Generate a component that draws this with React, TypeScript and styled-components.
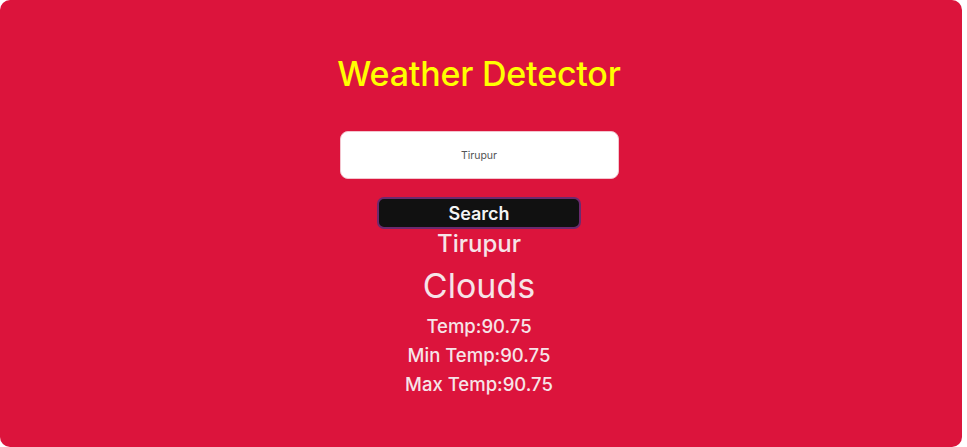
import React from "react";
import styled, { createGlobalStyle } from "styled-components";

const Global = createGlobalStyle`
  html, body { margin: 0; padding: 0; background: #ffffff; }
  body { font-family: "Inter", "Noto Sans", sans-serif; }
`;

const Card = styled.div`
  width: 962px;
  height: 447px;
  background: #dc143c;
  border-radius: 10px;
  display: flex;
  flex-direction: column;
  align-items: center;
  box-sizing: border-box;
  padding-top: 52px;
  padding-right: 4px;
`;

const Title = styled.h1`
  margin: 0;
  color: #ffff00;
  font-size: 34px;
  font-weight: 500;
  line-height: 44px;
  letter-spacing: -0.2px;
`;

const SearchInput = styled.input`
  margin-top: 35px;
  width: 279px;
  height: 48px;
  box-sizing: border-box;
  border: 1px solid #f3c5cf;
  border-radius: 8px;
  background: #ffffff;
  text-align: center;
  font-family: inherit;
  font-size: 10.5px;
  color: #555;
  outline: none;
`;

const SearchButton = styled.button`
  margin-top: 18px;
  width: 204px;
  height: 32px;
  box-sizing: border-box;
  background: #111111;
  border: 2px solid #6b2a6e;
  border-radius: 7px;
  color: #f4f4f4;
  font-family: inherit;
  font-size: 18px;
  font-weight: 600;
  cursor: pointer;
`;

const Line = styled.div<{ $size: number; $top: number; $weight?: number }>`
  margin-top: ${(p) => p.$top}px;
  color: #f6e4e8;
  font-size: ${(p) => p.$size}px;
  font-weight: ${(p) => p.$weight ?? 500};
  line-height: 1.2;
`;

export default function App() {
  return (
    <>
      <Global />
      <Card>
        <Title>Weather Detector</Title>
        <SearchInput defaultValue="Tirupur" />
        <SearchButton>Search</SearchButton>
        <Line $size={24} $top={1}>Tirupur</Line>
        <Line $size={34} $top={7} $weight={400}>Clouds</Line>
        <Line $size={18.5} $top={8}>Temp:90.75</Line>
        <Line $size={18.5} $top={7}>Min Temp:90.75</Line>
        <Line $size={18.5} $top={7}>Max Temp:90.75</Line>
      </Card>
    </>
  );
}
